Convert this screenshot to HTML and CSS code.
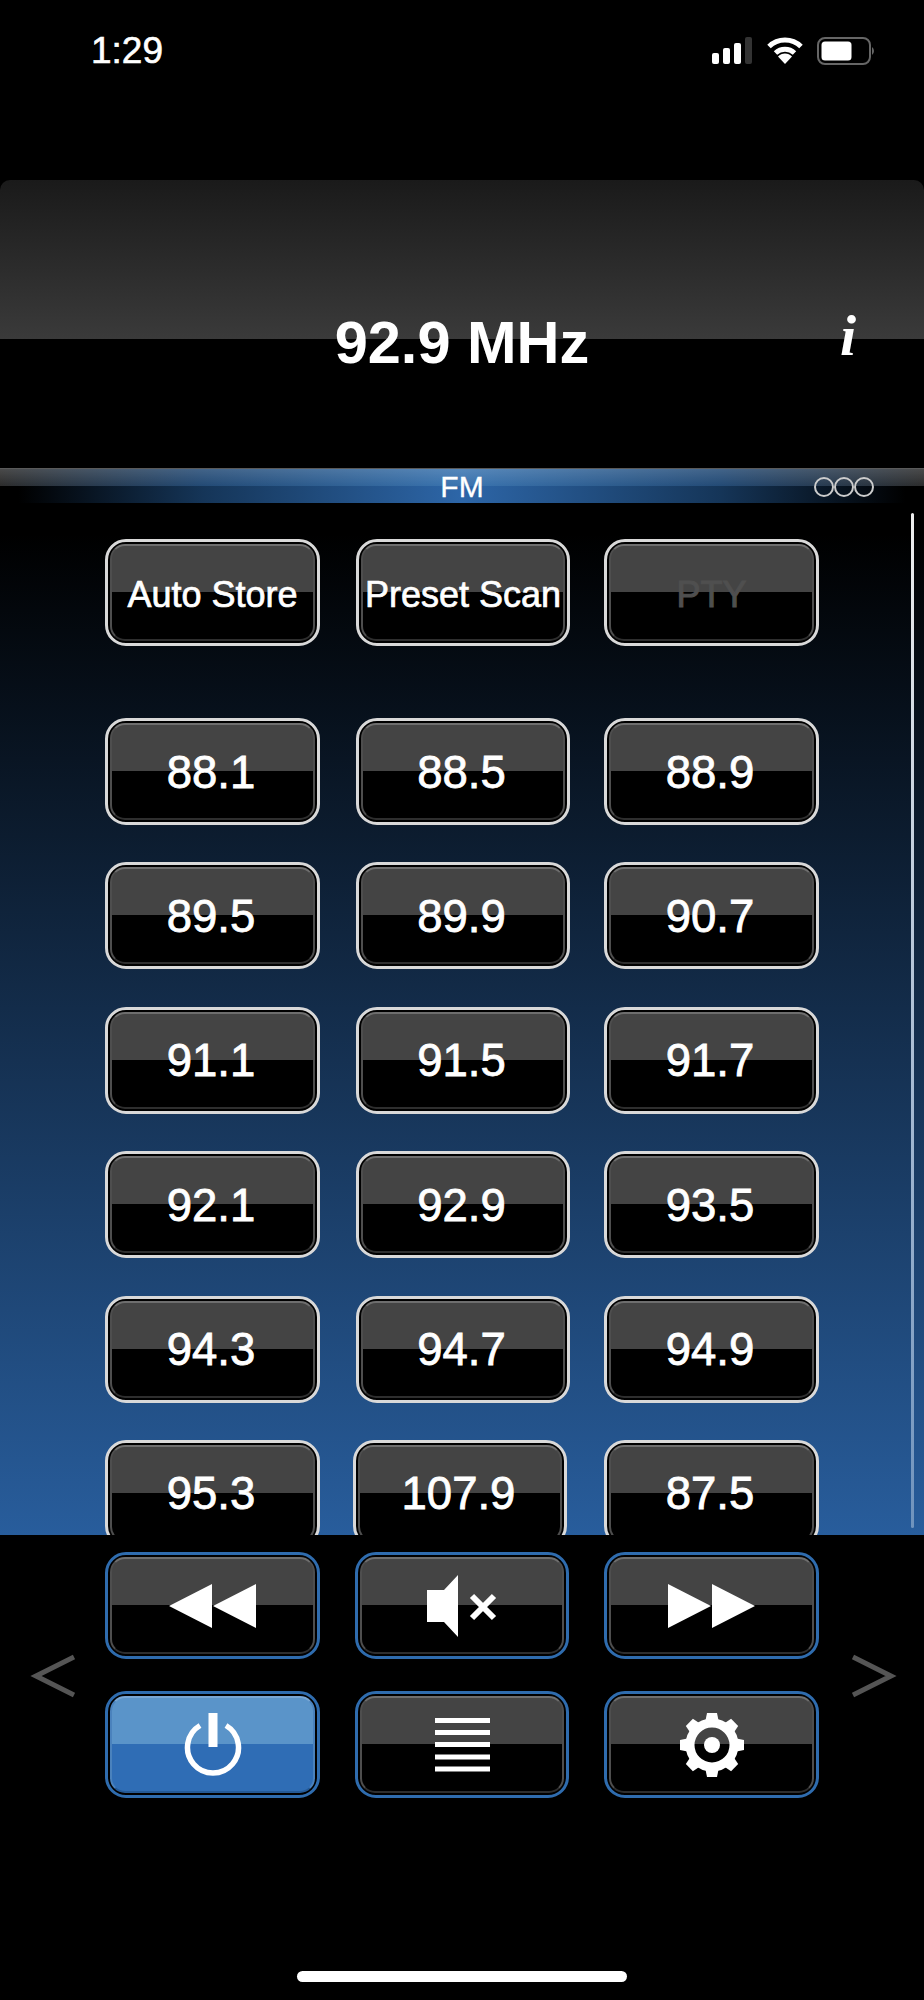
FILE: index.html
```html
<!DOCTYPE html>
<html lang="en">
<head>
  <meta charset="UTF-8">
  <meta name="viewport" content="width=device-width, initial-scale=1.0">
  <title>FM Radio</title>
  <link rel="stylesheet" href="styles.css">
</head>
<body>
  <!-- status bar -->
  <div class="status-bar">
    <span class="clock">1:29</span>
    <div class="status-icons">
      <svg width="41" height="27" viewBox="0 0 41 27">
        <rect x="0" y="16" width="7" height="11" rx="2" fill="#fff"/>
        <rect x="11" y="11" width="7" height="16" rx="2" fill="#fff"/>
        <rect x="22" y="6" width="7" height="21" rx="2" fill="#fff"/>
        <rect x="33" y="0" width="7" height="27" rx="2" fill="#333"/>
      </svg>
      <svg width="36" height="27" viewBox="0 0 36 27">
        <path d="M2 9.5a23 23 0 0 1 32 0" fill="none" stroke="#fff" stroke-width="5"/>
        <path d="M8.5 16a14 14 0 0 1 19 0" fill="none" stroke="#fff" stroke-width="5"/>
        <path d="M18 27l-7-7.5a9.500 9.500 0 0 1 14 0z" fill="#fff"/>
      </svg>
      <svg width="58" height="28" viewBox="0 0 58 28">
        <rect x="1" y="1" width="52" height="26" rx="7" fill="none" stroke="#666" stroke-width="2"/>
        <rect x="4.500" y="4.500" width="30" height="19" rx="3.500" fill="#fff"/>
        <path d="M55 10a5 5 0 0 1 0 8z" fill="#666"/>
      </svg>
    </div>
  </div>

  <!-- frequency display -->
  <div class="display">
    <span></span>
    <h1 class="frequency">92.9 MHz</h1>
    <span class="info">i</span>
  </div>

  <!-- band strip -->
  <div class="band">
    <span class="band-name">FM</span>
    <div class="band-dots"><i></i><i></i><i></i></div>
  </div>

  <!-- presets, cut off by the controls below -->
  <div class="presets">
    <div class="scrollbar"></div>
    <div class="btn-grid top-actions">
      <button class="btn"><span class="face small">Auto Store</span></button>
      <button class="btn"><span class="face small">Preset Scan</span></button>
      <button class="btn"><span class="face small disabled">PTY</span></button>
    </div>
    <div class="btn-grid">
      <button class="btn"><span class="face">88.1</span></button>
      <button class="btn"><span class="face">88.5</span></button>
      <button class="btn"><span class="face">88.9</span></button>
      <button class="btn"><span class="face">89.5</span></button>
      <button class="btn"><span class="face">89.9</span></button>
      <button class="btn"><span class="face">90.7</span></button>
      <button class="btn"><span class="face">91.1</span></button>
      <button class="btn"><span class="face">91.5</span></button>
      <button class="btn"><span class="face">91.7</span></button>
      <button class="btn"><span class="face">92.1</span></button>
      <button class="btn"><span class="face">92.9</span></button>
      <button class="btn"><span class="face">93.5</span></button>
      <button class="btn"><span class="face">94.3</span></button>
      <button class="btn"><span class="face">94.7</span></button>
      <button class="btn"><span class="face">94.9</span></button>
      <button class="btn"><span class="face">95.3</span></button>
      <button class="btn nudged"><span class="face">107.9</span></button>
      <button class="btn"><span class="face">87.5</span></button>
    </div>
  </div>

  <!-- playback controls -->
  <div class="controls">
    <svg class="arrow arrow-left" width="45" height="44" viewBox="0 0 45 44">
      <path d="M44 3L6 22l38 19" fill="none" stroke="#555" stroke-width="5"/>
    </svg>
    <div class="btn-grid control-grid">
      <button class="btn blue"><span class="face">
        <svg width="87" height="44" viewBox="0 0 87 44"><path d="M43 0v44L0 22zM87 0v44L44 22z" fill="#fff"/></svg>
      </span></button>
      <button class="btn blue"><span class="face">
        <svg width="70" height="62" viewBox="0 0 70 62">
          <path d="M0 15h17L31 0v62L17 47H0z" fill="#fff"/>
          <path d="M45 21l22 22M67 21L45 43" stroke="#fff" stroke-width="6" fill="none"/>
        </svg>
      </span></button>
      <button class="btn blue"><span class="face">
        <svg width="87" height="44" viewBox="0 0 87 44"><path d="M0 0v44l43-22zM44 0v44l43-22z" fill="#fff"/></svg>
      </span></button>
      <button class="btn blue on"><span class="face">
        <svg width="60" height="64" viewBox="0 0 60 64">
          <path d="M17 12.500a25.500 25.500 0 1 0 26 0" fill="none" stroke="#fff" stroke-width="5.500"/>
          <rect x="25.500" y="0" width="9" height="34" fill="#fff"/>
        </svg>
      </span></button>
      <button class="btn blue"><span class="face">
        <svg width="55" height="54" viewBox="0 0 55 54">
          <path d="M0 2.500h55M0 14.500h55M0 26.500h55M0 39h55M0 51h55" stroke="#fff" stroke-width="5"/>
        </svg>
      </span></button>
      <button class="btn blue"><span class="face">
        <svg width="66" height="66" viewBox="0 0 66 66">
          <g fill="#fff">
            <path d="M28 1h10l2 10H26z"/>
            <path d="M28 1h10l2 10H26z" transform="rotate(45 33 33)"/>
            <path d="M28 1h10l2 10H26z" transform="rotate(90 33 33)"/>
            <path d="M28 1h10l2 10H26z" transform="rotate(135 33 33)"/>
            <path d="M28 1h10l2 10H26z" transform="rotate(180 33 33)"/>
            <path d="M28 1h10l2 10H26z" transform="rotate(225 33 33)"/>
            <path d="M28 1h10l2 10H26z" transform="rotate(270 33 33)"/>
            <path d="M28 1h10l2 10H26z" transform="rotate(315 33 33)"/>
          </g>
          <circle cx="33" cy="33" r="22" fill="none" stroke="#fff" stroke-width="9"/>
          <circle cx="33" cy="33" r="8" fill="#fff"/>
        </svg>
      </span></button>
    </div>
    <svg class="arrow arrow-right" width="45" height="44" viewBox="0 0 45 44">
      <path d="M1 3l38 19L1 41" fill="none" stroke="#555" stroke-width="5"/>
    </svg>
  </div>

  <div class="home-bar"></div>
</body>
</html>
```

FILE: styles.css
```css
* {
  box-sizing: border-box;
}

body {
  margin: 0;
  width: 924px;
  height: 2000px;
  overflow: hidden;
  background-color: black;
  color: white;
  font-family: "Liberation Sans", Arial, sans-serif;
}

/* status bar */
.status-bar {
  height: 180px;
  padding: 32px 49px 0 91px;
  display: flex;
  justify-content: space-between;
  align-items: flex-start;
}

.clock {
  font-size: 37px;
  line-height: 38px;
  -webkit-text-stroke: 0.6px white;
}

.status-icons {
  display: flex;
  gap: 14px;
  padding-top: 5px;
  align-items: flex-start;
}

/* frequency display */
.display {
  height: 288px;
  padding-top: 130px;
  border-radius: 10px 10px 0 0;
  background: linear-gradient(#1a1a1a, #3a3a3a 159px, black 159px);
  display: grid;
  grid-template-columns: 1fr auto 1fr;
  align-items: start;
}

.frequency {
  margin: 0;
  font-size: 59.500px;
  line-height: 66px;
  font-weight: bold;
}

.info {
  justify-self: end;
  margin-right: 68px;
  margin-top: -7px;
  font-family: "Liberation Serif", serif;
  font-style: italic;
  font-weight: bold;
  font-size: 58px;
  line-height: 66px;
}

/* band strip */
.band {
  height: 35px;
  position: relative;
  display: flex;
  justify-content: center;
  border-top: 1px solid #5a5a5a;
  background:
    linear-gradient(rgba(255, 255, 255, 0.14), rgba(255, 255, 255, 0)) top / 100% 17px no-repeat,
    linear-gradient(90deg, #2c2c2c, #234a75 22%, #3a74b0 50%, #234a75 78%, #2c2c2c) top / 100% 17px no-repeat,
    linear-gradient(90deg, black 2%, #153558 22%, #2d66a8 50%, #153558 78%, black 98%);
}

.band-name {
  font-size: 30px;
  line-height: 34px;
  padding-top: 1px;
  -webkit-text-stroke: 0.3px white;
}

.band-dots {
  position: absolute;
  top: 8px;
  left: 814px;
  display: flex;
}

.band-dots i {
  width: 20px;
  height: 20px;
  border: 2px solid #ccc;
  border-radius: 50%;
}

/* preset list */
.presets {
  height: 1032px;
  position: relative;
  overflow: hidden;
  padding: 36px 0 0 105px;
  background: linear-gradient(black 3%, #285d9c);
}

.presets .btn:nth-child(3n+2) {
  margin: 0 -1px 0 1px;
}

.presets .btn.nudged {
  margin: 0 2px 0 -2px;
}

.scrollbar {
  position: absolute;
  top: 10px;
  right: 10px;
  width: 3px;
  height: 1015px;
  border-radius: 2px;
  background: linear-gradient(#eee, #6f93bd);
}

.btn-grid {
  width: 714px;
  display: grid;
  grid-template-columns: 215px 214px 215px;
  grid-auto-rows: 107px;
  column-gap: 35px;
  row-gap: 37.4px;
}

.top-actions {
  margin-bottom: 72px;
}

/* buttons */
.btn {
  padding: 2px;
  border: 3px solid #d9d9d9;
  border-radius: 21px;
  background: black;
  color: white;
  font-family: inherit;
}

.face {
  height: 100%;
  padding: 2px 3px 0 0;
  display: flex;
  align-items: center;
  justify-content: center;
  border-radius: 15px;
  border: 2px solid #2e2e2e;
  border-top-color: #6e6e6e;
  border-left-color: #4e4e4e;
  border-right-color: #4e4e4e;
  background: linear-gradient(#444 49%, black 49%);
  font-size: 45.500px;
  -webkit-text-stroke: 0.8px white;
}

.blue .face {
  padding: 0;
}

.face.small {
  padding: 5px 0 0;
  font-size: 36px;
  -webkit-text-stroke: 0.7px white;
}

.face.disabled {
  color: #4f4f4f;
  -webkit-text-stroke: 1px #4f4f4f;
}

.blue {
  border-color: #2f6cae;
}

.on .face {
  border-color: #79a6d4 #4a82bd #255a96;
  background: linear-gradient(#5a94c9 49%, #2f6db5 49%);
}

/* playback controls */
.controls {
  height: 465px;
  padding: 17px 0 0 30px;
  display: flex;
  align-items: flex-start;
}

.arrow {
  margin-top: 102px;
}

.arrow-left {
  margin-right: 30px;
}

.arrow-right {
  margin-left: 33px;
}

.control-grid {
  row-gap: 32px;
}

.home-bar {
  position: absolute;
  left: 297px;
  top: 1971px;
  width: 330px;
  height: 11px;
  border-radius: 6px;
  background: white;
}
```
